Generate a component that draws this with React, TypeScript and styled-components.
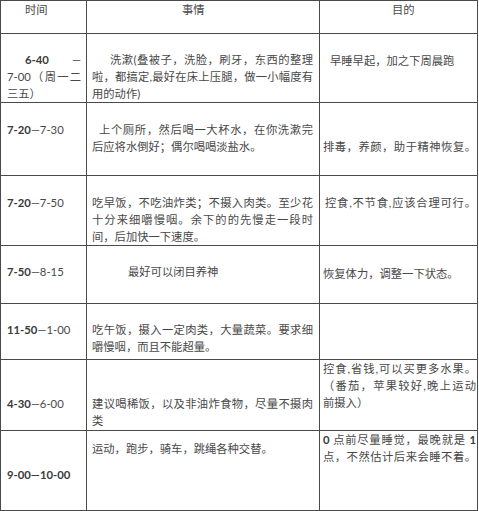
import styled, { createGlobalStyle } from "styled-components";

const GlobalStyle = createGlobalStyle`
  html, body {
    margin: 0;
    padding: 0;
    background: #ffffff;
  }
`;

const LINE = "#4a4a4a";

const Table = styled.div`
  display: grid;
  grid-template-columns: 86px 233px 158px;
  grid-template-rows: 33px 69px 73px 70px 58px 56px 71px 80px;
  width: max-content;
  border-top: 1px solid ${LINE};
  border-left: 1px solid ${LINE};
  font-family: "Lato", "Noto Sans CJK SC", sans-serif;
  font-size: 11.3px;
  line-height: 17px;
  color: #484848;
`;

const pads = {
  1: { left: 6, right: 5 },
  2: { left: 5, right: 6 },
  3: { left: 3, right: 1 },
};

type CellProps = { $col: 1 | 2 | 3; $top?: number };

const Cell = styled.div<CellProps>`
  box-sizing: border-box;
  border-right: 1px solid ${LINE};
  border-bottom: 1px solid ${LINE};
  padding-top: ${(p) => p.$top ?? 0}px;
  padding-left: ${(p) => pads[p.$col].left}px;
  padding-right: ${(p) => pads[p.$col].right}px;
  overflow: hidden;
`;

const Line = styled.div<{ $full?: boolean; $indent?: number }>`
  text-indent: ${(p) => p.$indent ?? 0}px;
  text-align: left;
  text-align-last: ${(p) => (p.$full ? "justify" : "auto")};
`;

const Num = styled.b`
  font-weight: 700;
  color: #3a3a3a;
`;

const App = () => {
  return (
    <>
      <GlobalStyle />
      <Table>
        {/* header */}
        <Cell $col={1}>
          <Line $indent={18}>时间</Line>
        </Cell>
        <Cell $col={2}>
          <Line $indent={90}>事情</Line>
        </Cell>
        <Cell $col={3}>
          <Line $indent={69}>目的</Line>
        </Cell>

        {/* 6-40 */}
        <Cell $col={1} $top={17}>
          <Line $full $indent={18}>
            <Num>6-40</Num> —
          </Line>
          <Line $full>7-00（周一二</Line>
          <Line>三五）</Line>
        </Cell>
        <Cell $col={2} $top={17}>
          <Line $full $indent={18}>
            洗漱(叠被子，洗脸，刷牙，东西的整理
          </Line>
          <Line $full>啦，都搞定,最好在床上压腿，做一小幅度有</Line>
          <Line>用的动作)</Line>
        </Cell>
        <Cell $col={3} $top={18}>
          <Line $indent={7}>早睡早起，加之下周晨跑</Line>
        </Cell>

        {/* 7-20 */}
        <Cell $col={1} $top={18}>
          <Line>
            <Num>7-20</Num>—7-30
          </Line>
        </Cell>
        <Cell $col={2} $top={18}>
          <Line $full $indent={7}>
            上个厕所，然后喝一大杯水，在你洗漱完
          </Line>
          <Line>后应将水倒好；偶尔喝喝淡盐水。</Line>
        </Cell>
        <Cell $col={3} $top={35}>
          <Line $full>排毒，养颜，助于精神恢复。</Line>
        </Cell>

        {/* 7-20 breakfast */}
        <Cell $col={1} $top={18}>
          <Line>
            <Num>7-20</Num>—7-50
          </Line>
        </Cell>
        <Cell $col={2} $top={18}>
          <Line $full>吃早饭，不吃油炸类；不摄入肉类。至少花</Line>
          <Line $full>十分来细嚼慢咽。余下的的先慢走一段时</Line>
          <Line>间，后加快一下速度。</Line>
        </Cell>
        <Cell $col={3} $top={18}>
          <Line $full $indent={2}>
            控食,不节食,应该合理可行。
          </Line>
        </Cell>

        {/* 7-50 */}
        <Cell $col={1} $top={17}>
          <Line>
            <Num>7-50</Num>—8-15
          </Line>
        </Cell>
        <Cell $col={2} $top={17}>
          <Line $indent={36}>最好可以闭目养神</Line>
        </Cell>
        <Cell $col={3} $top={19}>
          <Line>恢复体力，调整一下状态。</Line>
        </Cell>

        {/* 11-50 */}
        <Cell $col={1} $top={17}>
          <Line>
            <Num>11-50</Num>—1-00
          </Line>
        </Cell>
        <Cell $col={2} $top={17}>
          <Line $full>吃午饭，摄入一定肉类，大量蔬菜。要求细</Line>
          <Line>嚼慢咽，而且不能超量。</Line>
        </Cell>
        <Cell $col={3} />

        {/* 4-30 */}
        <Cell $col={1} $top={35}>
          <Line>
            <Num>4-30</Num>—6-00
          </Line>
        </Cell>
        <Cell $col={2} $top={35}>
          <Line $full>建议喝稀饭，以及非油炸食物，尽量不摄肉</Line>
          <Line>类</Line>
        </Cell>
        <Cell $col={3} $top={0}>
          <Line $full>控食,省钱,可以买更多水果。</Line>
          <Line $full>（番茄，苹果较好,晚上运动</Line>
          <Line>前摄入）</Line>
        </Cell>

        {/* 9-00 */}
        <Cell $col={1} $top={35}>
          <Line>
            <Num>9-00—10-00</Num>
          </Line>
        </Cell>
        <Cell $col={2} $top={9}>
          <Line>运动，跑步，骑车，跳绳各种交替。</Line>
        </Cell>
        <Cell $col={3} $top={0}>
          <Line $full>
            <Num>0</Num> 点前尽量睡觉，最晚就是 <Num>1</Num>
          </Line>
          <Line $full>点，不然估计后来会睡不着。</Line>
        </Cell>
      </Table>
    </>
  );
};

export default App;
